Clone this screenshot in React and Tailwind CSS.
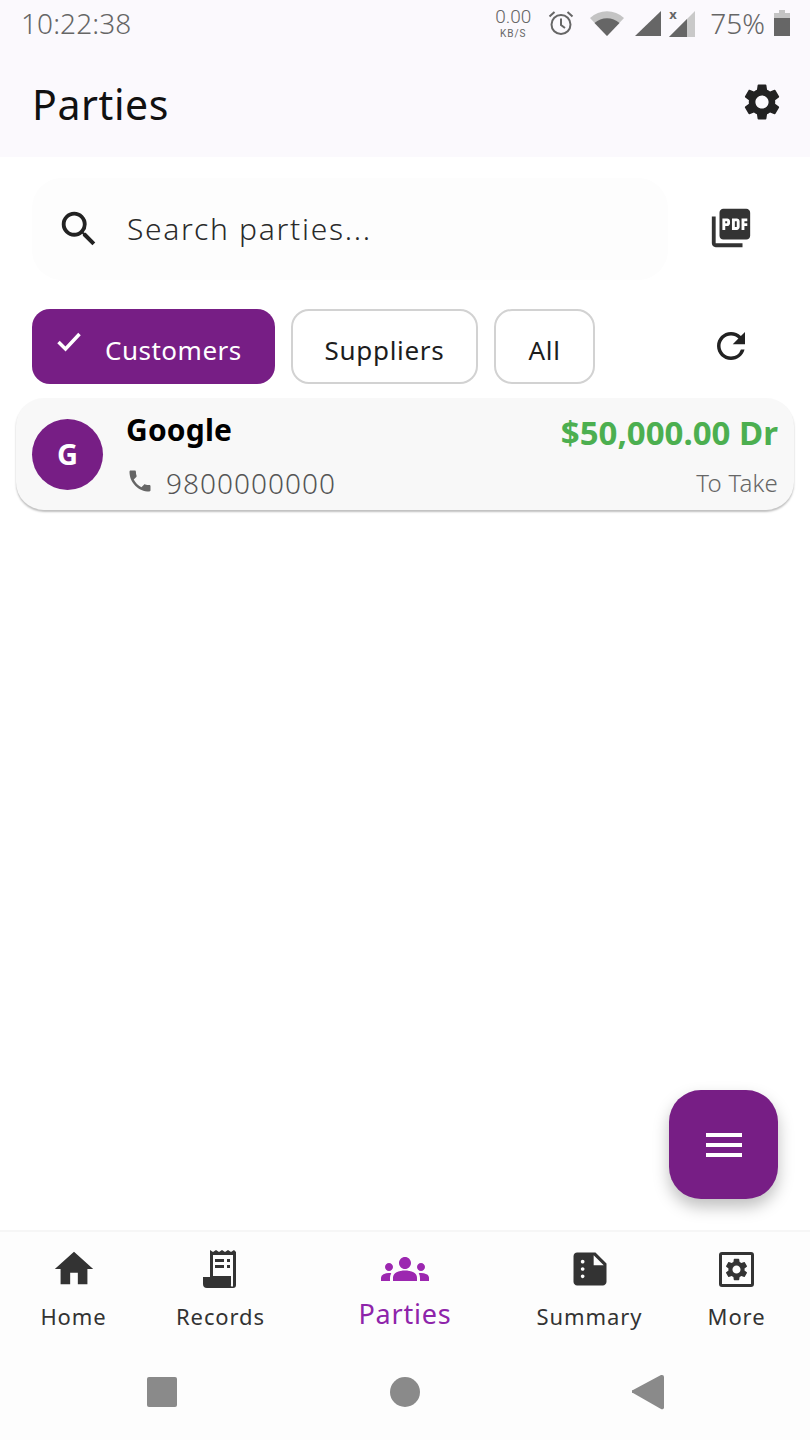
import {
  MdGroups,
  MdHome,
  MdMenu,
  MdPhone,
  MdPictureAsPdf,
  MdRefresh,
  MdSearch,
  MdSettings,
  MdSummarize,
} from "react-icons/md";

// Status bar glyphs, drawn because no icon package has these exact shapes
function StatusBar() {
  return (
    <div className="h-[46px] flex items-center pl-[21px] pr-[20px] text-[#666666]">
      <span className="text-[28px] leading-none tracking-[0.1px] font-light">10:22:38</span>
      <div className="ml-auto flex items-center">
        <div className="flex flex-col items-center w-[38px] font-['Roboto',sans-serif]">
          <span className="block text-[19px] leading-[22px] font-light">0.00</span>
          <span className="block text-[10px] leading-[12px] tracking-[1px]">KB/S</span>
        </div>
        <svg className="ml-[15px]" width="28" height="28" viewBox="0 0 28 28" fill="none" stroke="#666666" strokeWidth="2">
          <circle cx="14" cy="15.5" r="9.5" />
          <path d="M14 9.500v6.500l4 3M2.500 7.500l5-4.500M25.500 7.500l-5-4.500" />
        </svg>
        <svg className="ml-[14px]" width="36" height="26" viewBox="0 0 36 26">
          <path d="M1 8a25 25 0 0 1 34 0L18 26z" fill="#c4c4c4" />
          <path d="M5.500 13a19 19 0 0 1 25 0L18 26z" fill="#666666" />
        </svg>
        <svg className="ml-[10px]" width="26" height="26" viewBox="0 0 26 26">
          <path d="M26 1v25H0z" fill="#666666" />
        </svg>
        <div className="relative ml-[8px] w-[26px] h-[28px]">
          <svg width="26" height="28" viewBox="0 0 26 28">
            <path d="M26 2v26H0z" fill="#c9c9c9" />
            <path d="M18 10v18H0z" fill="#666666" />
          </svg>
          <span className="absolute left-0 top-0 block text-[13px] leading-[11px] font-bold">x</span>
        </div>
        <span className="ml-[15px] text-[28px] leading-none font-light">75%</span>
        <svg className="ml-[9px]" width="16" height="26" viewBox="0 0 16 26">
          <path d="M5 0h6v3h5v23H0V3h5z" fill="#c4c4c4" />
          <path d="M0 8h16v18H0z" fill="#666666" />
        </svg>
      </div>
    </div>
  );
}

function Chip({ label, selected, className }) {
  if (selected) {
    return (
      <div className={`h-[75px] rounded-[18px] bg-[#771e85] text-white flex items-center ${className}`}>
        <svg className="ml-[25px] mt-[-9px]" width="24" height="20" viewBox="0 0 24 20" fill="none" stroke="currentColor" strokeWidth="3.5">
          <path d="M1.500 10l7 7L22.500 2" />
        </svg>
        <span className="ml-[24px] text-[26px] tracking-[0.5px] mt-[7px]">{label}</span>
      </div>
    );
  }
  return (
    <div className={`h-[75px] rounded-[18px] border-2 border-[#d2d2d2] bg-white text-[#1d1d1d] flex items-center justify-center ${className}`}>
      <span className="text-[26px] tracking-[0.7px] mt-[7px]">{label}</span>
    </div>
  );
}

function PartyCard() {
  return (
    <div className="mt-[14px] mx-[16px] h-[112px] rounded-[28px] bg-[#f8f8f8] shadow-[0_2px_2px_rgba(0,0,0,0.25)] flex items-center pl-[16px] pr-[16px]">
      <div className="w-[71px] h-[71px] rounded-full bg-[#771e85] text-white flex items-center justify-center text-[29px] font-bold">
        G
      </div>
      <div className="ml-[24px] flex flex-col h-full">
        <span className="mt-[12px] text-[30px] leading-[40px] font-bold text-black tracking-[0.2px] ml-[-1px]">Google</span>
        <div className="mt-[15px] flex items-center text-[#555555]">
          <MdPhone size={28} className="ml-[-1px] mt-[-4px] text-[#666666]" />
          <span className="ml-[12px] text-[28px] leading-[36px] tracking-[1px] font-light">9800000000</span>
        </div>
      </div>
      <div className="ml-auto flex flex-col items-end h-full">
        <span className="mt-[15px] text-[33px] leading-[40px] font-bold text-[#4caf50]">$50,000.00 Dr</span>
        <span className="mt-[14px] text-[24px] leading-[32px] text-[#666666] font-light tracking-[0.2px]">To Take</span>
      </div>
    </div>
  );
}

function NavItem({ icon, label, active, className }) {
  return (
    <div className={`flex flex-col items-center ${className}`}>
      <div className="h-[46px] flex items-center justify-center">{icon}</div>
      <span
        className={
          active
            ? "mt-[5px] text-[27px] leading-[34px] tracking-[0.8px] text-[#8e24aa]"
            : "mt-[8px] text-[22px] leading-[32px] tracking-[0.9px] text-[#333333]"
        }
      >
        {label}
      </span>
    </div>
  );
}

function RecordsIcon() {
  return (
    <svg width="36" height="40" viewBox="0 0 36 40" fill="#333333">
      <path d="M7 1l3 2 3-2 3 2 3-2 3 2 3-2 3 2 3-2 2 2v33a3 3 0 0 1-3 3H4a4 4 0 0 1-4-4v-7h7zM10 6v21h18v9a1 1 0 0 0 2 1V6z" fillRule="evenodd" />
      <path d="M12 10h9v3h-9zM24 10h3v3h-3zM12 16h9v3h-9zM24 16h3v3h-3z" />
    </svg>
  );
}

function MoreIcon() {
  return (
    <div className="w-[35px] h-[35px] rounded-[3px] border-[3px] border-[#333333] flex items-center justify-center">
      <MdSettings size={27} className="text-[#333333]" />
    </div>
  );
}

export default function App() {
  return (
    <div className="relative w-[810px] h-[1440px] bg-white flex flex-col font-['Noto_Sans',sans-serif] overflow-hidden">
      <div className="h-[157px] bg-[#fbf9fd] shrink-0">
        <StatusBar />
        <div className="h-[111px] flex items-center pl-[32px] pr-[26px]">
          <span className="text-[41px] text-[#111111] leading-none tracking-[0.6px] mt-[5px]">Parties</span>
          <MdSettings className="ml-auto text-[#222222]" size={44} />
        </div>
      </div>

      <div className="flex-1 flex flex-col">
        <div className="mt-[21px] pl-[32px] pr-[56px] flex items-center">
          <div className="w-[636px] h-[102px] rounded-[30px] bg-[#fdfdfd] flex items-center pl-[24px]">
            <MdSearch size={46} className="text-[#222222]" />
            <span className="ml-[25px] text-[30px] tracking-[1.7px] text-[#2a2a2a] font-light mt-[-2px]">Search parties...</span>
          </div>
          <MdPictureAsPdf size={46} className="ml-auto text-[#333333] mt-[-2px]" />
        </div>

        <div className="mt-[29px] pl-[32px] pr-[58px] flex items-center gap-[16px]">
          <Chip label="Customers" selected className="w-[243px]" />
          <Chip label="Suppliers" className="w-[187px]" />
          <Chip label="All" className="w-[101px]" />
          <MdRefresh size={42} className="ml-auto text-[#222222] mt-[-2px]" />
        </div>

        <PartyCard />
      </div>

      <div className="absolute left-[669px] top-[1090px] w-[109px] h-[109px] rounded-[32px] bg-[#771e85] shadow-[0_8px_16px_rgba(0,0,0,0.25)] flex items-center justify-center">
        <MdMenu size={48} className="text-white" />
      </div>

      <div className="h-[115px] shrink-0 bg-[#fdfdfd] border-t-2 border-[#f6f6f6] flex pt-[14px]">
        <NavItem icon={<MdHome size={46} className="text-[#333333]" />} label="Home" className="w-[147px]" />
        <NavItem icon={<RecordsIcon />} label="Records" className="w-[147px]" />
        <NavItem icon={<MdGroups size={48} className="text-[#9c27b0]" />} label="Parties" active className="w-[222px]" />
        <NavItem icon={<MdSummarize size={44} className="text-[#333333]" />} label="Summary" className="w-[147px]" />
        <NavItem icon={<MoreIcon />} label="More" className="w-[147px]" />
      </div>

      <div className="h-[95px] shrink-0 bg-[#fdfdfd] flex items-center pb-[1px]">
        <div className="ml-[147px] w-[30px] h-[30px] rounded-[2px] bg-[#8a8a8a]" />
        <div className="ml-[213px] w-[30px] h-[30px] rounded-full bg-[#8a8a8a]" />
        <svg className="ml-[212px]" width="32" height="36" viewBox="0 0 32 36">
          <path d="M30 1a2 2 0 0 1 2 2v30a2 2 0 0 1-3 2L1 19a1.500 1.500 0 0 1 0-3L29 1z" fill="#8a8a8a" />
        </svg>
      </div>
    </div>
  );
}
